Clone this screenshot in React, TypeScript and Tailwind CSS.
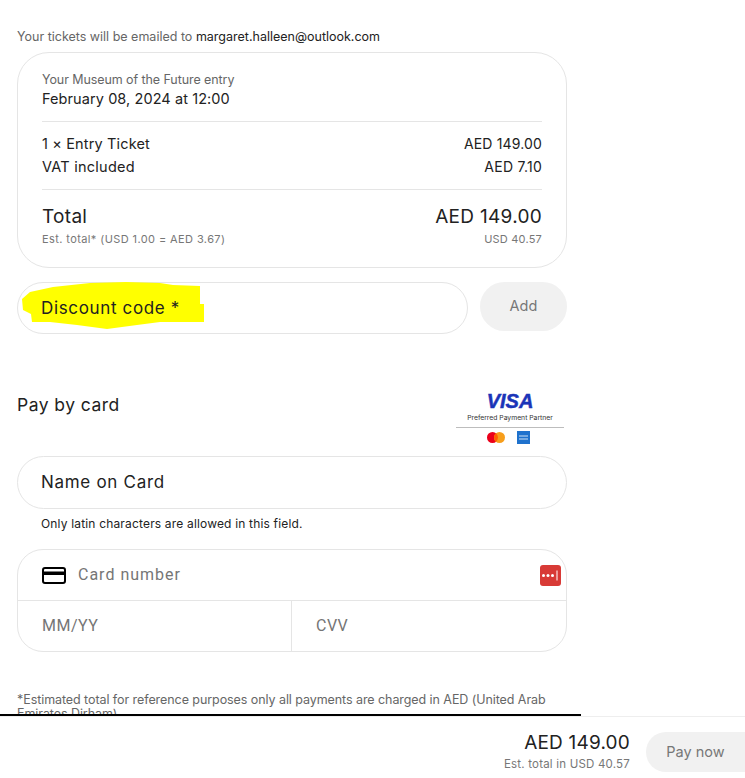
const sans = "font-['Inter','Open_Sans',sans-serif]";

function CardIcon() {
  return (
    <svg width="24" height="17" viewBox="0 0 24 17" fill="none" className="shrink-0">
      <rect x="1" y="1" width="22" height="15" rx="2" stroke="#000" strokeWidth="2" />
      <rect x="1" y="4.5" width="22" height="3.5" fill="#000" />
    </svg>
  );
}

function PasswordIcon() {
  return (
    <svg width="21" height="21" viewBox="0 0 21 21" className="absolute left-[522px] top-[15px]">
      <rect width="21" height="21" rx="3" fill="#d83a36" />
      <circle cx="3.5" cy="10.5" r="1.5" fill="#fff" />
      <circle cx="8" cy="10.5" r="1.5" fill="#fff" />
      <circle cx="12.5" cy="10.5" r="1.5" fill="#fff" />
      <rect x="16.5" y="5.5" width="1" height="10" fill="#fff" />
    </svg>
  );
}

function PaymentLogos() {
  return (
    <div className="flex w-[108px] flex-col items-center">
      <div className="h-[22px] font-['Liberation_Sans',sans-serif] text-[20px] leading-[22px] font-bold italic text-[#1a34b8] [-webkit-text-stroke:0.5px_#1a34b8]">
        VISA
      </div>
      <div className="mt-px h-[9px] font-['Inter',sans-serif] text-[6.8px] leading-[9px] whitespace-nowrap text-[#333]">
        Preferred Payment Partner
      </div>
      <div className="mt-[5px] h-px w-full bg-[#bdbdbd]" />
      <div className="mt-[3px] mr-[4px] flex items-center gap-[12px]">
        <svg width="18" height="11" viewBox="0 0 18 11">
          <circle cx="5.5" cy="5.5" r="5.5" fill="#eb001b" />
          <circle cx="12.5" cy="5.5" r="5.5" fill="#f79e1b" />
          <path d="M9 1.3a5.5 5.5 0 0 1 0 8.4a5.5 5.5 0 0 1 0-8.4z" fill="#ff5f00" />
        </svg>
        <svg width="13" height="13" viewBox="0 0 13 13">
          <rect width="13" height="13" fill="#1f72cd" />
          <rect x="2" y="4.5" width="9" height="1" fill="#cfe2f6" />
          <rect x="2" y="7.5" width="9" height="1" fill="#cfe2f6" />
        </svg>
      </div>
    </div>
  );
}

export default function App() {
  return (
    <div className={`flex h-[778px] w-[745px] flex-col overflow-hidden bg-white ${sans}`}>
      <div className="h-[714px] overflow-hidden pt-[28px] pl-[17px]">
        <div className="w-[550px]">
          <p className="text-[12.5px] leading-[17px] text-[#666]">
            Your tickets will be emailed to <span className="text-[#222]">margaret.halleen@outlook.com</span>
          </p>

          <div className="mt-[7px] h-[216px] rounded-[32px] border border-[#e5e5e5] px-[24px] pt-[19px]">
            <div className="text-[12.5px] leading-[16px] tracking-[-0.08px] text-[#666]">Your Museum of the Future entry</div>
            <div className="mt-px text-[14.5px] leading-[20px] tracking-[0.08px] text-[#222]">February 08, 2024 at 12:00</div>
            <div className="mt-[12px] border-t border-[#e5e5e5] pt-[10px]">
              <div className="flex h-[23px] items-center justify-between text-[14.5px] tracking-[0.15px] text-[#222]">
                <span>1 × Entry Ticket</span>
                <span className="text-[14px]">AED 149.00</span>
              </div>
              <div className="flex h-[23px] items-center justify-between text-[14.5px] tracking-[0.25px] text-[#222]">
                <span>VAT included</span>
                <span className="text-[14px]">AED 7.10</span>
              </div>
            </div>
            <div className="mt-[11px] border-t border-[#e5e5e5] pt-[14px]">
              <div className="flex h-[26px] items-center justify-between text-[19px] tracking-[0.3px] text-[#222]">
                <span>Total</span>
                <span>AED 149.00</span>
              </div>
              <div className="mt-px flex h-[17px] items-center justify-between text-[11px] tracking-[0.3px] text-[#777]">
                <span className="tracking-[0.4px]">Est. total* (USD 1.00 = AED 3.67)</span>
                <span className="tracking-[0.2px]">USD 40.57</span>
              </div>
            </div>
          </div>

          <div className="mt-[14px] flex items-start gap-[12px]">
            <div className="relative flex h-[52px] w-[451px] items-center rounded-full border border-[#e5e5e5] pt-[2px] pl-[23px]">
              <svg width="190" height="50" viewBox="0 0 190 50" className="absolute left-[2px] top-[-1px]">
                <path d="M2 17L10 10L33 5L70 1L106 0L140 1L153 3L180 4L180 22L184 22L184 40L140 40L117 43L87 47L57 43L30 40L12 40L11 32L3 28Z" fill="#ffff00" />
              </svg>
              <span className="relative text-[17px] tracking-[0.65px] text-[#222]">Discount code *</span>
            </div>
            <div className="flex h-[49px] w-[87px] items-center justify-center rounded-full bg-[#f1f1f1] pb-[2px] text-[14.5px] tracking-[0.1px] text-[#777]">
              Add
            </div>
          </div>

          <div className="mt-[56px] flex items-start justify-between pr-[3px]">
            <div className="pt-[3px] text-[17.5px] leading-[24px] tracking-[0.45px] text-[#222]">Pay by card</div>
            <PaymentLogos />
          </div>

          <div className="mt-[12px] flex h-[53px] items-center rounded-full border border-[#e5e5e5] pl-[23px] text-[17px] tracking-[0.7px] text-[#222]">
            Name on Card
          </div>
          <p className="mt-[7px] pl-[24px] text-[12px] leading-[16px] tracking-[0.17px] text-[#222]">
            Only latin characters are allowed in this field.
          </p>

          <div className="relative mt-[17px] h-[103px] rounded-[26px] border border-[#e5e5e5] font-['Roboto',sans-serif] text-[16px] text-[#757575]">
            <div className="flex h-[51px] items-center gap-[12px] border-b border-[#e5e5e5] pl-[24px] tracking-[1px]">
              <CardIcon />
              <span>Card number</span>
            </div>
            <PasswordIcon />
            <div className="flex h-[50px] items-center tracking-[0.5px]">
              <div className="flex h-full w-[274px] items-center border-r border-[#e5e5e5] pl-[24px]">MM/YY</div>
              <div className="pl-[24px]">CVV</div>
            </div>
          </div>

          <p className="mt-[41px] text-[12.5px] leading-[14px] tracking-[-0.07px] text-[#666]">
            *Estimated total for reference purposes only all payments are charged in AED (United Arab Emirates Dirham)
          </p>
        </div>
      </div>

      <div className="h-[2px] w-[581px] shrink-0 bg-black" />
      <div className="flex h-[62px] shrink-0 items-start justify-end gap-[16px] border-t border-[#eeeeee] pt-[15px] pl-[17px]">
        <div className="flex flex-col items-end">
          <div className="text-[19px] leading-[22px] tracking-[0.2px] text-[#222]">AED 149.00</div>
          <div className="mt-[2px] text-[11.5px] leading-[16px] tracking-[0.2px] text-[#777]">Est. total in USD 40.57</div>
        </div>
        <div className="flex h-[40px] w-[99px] shrink-0 items-center justify-center rounded-l-full bg-[#f1f1f1] text-[14.5px] text-[#777]">
          Pay now
        </div>
      </div>
    </div>
  );
}
